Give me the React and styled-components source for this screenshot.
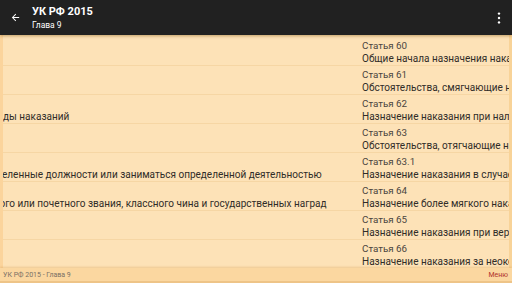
import React from "react";
import styled, { createGlobalStyle } from "styled-components";

const Global = createGlobalStyle`
  html, body { margin: 0; padding: 0; width: 512px; height: 283px; overflow: hidden; }
  body { font-family: Roboto, "Noto Sans", sans-serif; }
`;

const Screen = styled.div`
  width: 512px;
  height: 283px;
  display: flex;
  flex-direction: column;
  background: #fde2b7;
  overflow: hidden;
`;

const Toolbar = styled.header`
  height: 35px;
  flex: 0 0 35px;
  background: #212121;
  display: flex;
  align-items: center;
  padding: 0 6px 0 8px;
  box-shadow: 0 1px 3px rgba(120, 70, 0, 0.45);
  position: relative;
  z-index: 2;
`;

const IconButton = styled.div`
  width: 14px;
  height: 14px;
  display: flex;
  align-items: center;
  justify-content: center;
  color: #fff;
`;

const Titles = styled.div`
  display: flex;
  flex-direction: column;
  margin-left: 10px;
  flex: 1;
  color: #fff;
`;

const Title = styled.div`
  font-size: 11px;
  font-weight: 700;
  line-height: 14px;
`;

const Subtitle = styled.div`
  font-size: 8.5px;
  line-height: 11px;
  margin-top: 1px;
`;

const Content = styled.main`
  flex: 1;
  position: relative;
  overflow: hidden;
  padding-top: 2px;
  &::after {
    content: "";
    position: absolute;
    inset: 0;
    pointer-events: none;
    box-shadow: inset 3px 0 0 #fbd49c, inset -3px 0 0 #f8d398;
  }
`;

const Pager = styled.div`
  display: flex;
  width: 1024px;
  margin-left: ${(p) => p.$offset}px;
`;

const Page = styled.ul`
  list-style: none;
  margin: 0;
  padding: 0;
  width: 512px;
  flex: 0 0 512px;
`;

const Row = styled.li`
  box-sizing: border-box;
  height: 29px;
  padding: 3px 0 0 12px;
  border-bottom: 1px solid #f6d6a4;
  white-space: nowrap;
  overflow: hidden;
`;

const RowTitle = styled.div`
  font-size: 9.8px;
  line-height: 12px;
  color: #4a4540;
`;

const RowText = styled.div`
  font-size: 10px;
  line-height: 14px;
  color: #302c28;
`;

const Footer = styled.footer`
  flex: 0 0 13px;
  height: 13px;
  background: #fbd7a0;
  border-bottom: 2px solid #eec488;
  display: flex;
  align-items: center;
  justify-content: space-between;
  padding: 0 4px 0 3px;
  position: relative;
  z-index: 2;
  box-shadow: 0 -1px 2px rgba(200, 140, 60, 0.3);
`;

const FooterText = styled.span`
  font-size: 7px;
  color: ${(p) => (p.$accent ? "#b0302a" : "#7a7065")};
`;

const leftItems = [
  ["Статья 43", "Понятие и цели наказания"],
  ["Статья 44", "Виды наказаний"],
  ["Статья 45", "Основные и дополнительные виды наказаний"],
  ["Статья 46", "Штраф"],
  ["Статья 47", "Лишение права занимать определенные должности или заниматься определенной деятельностью"],
  ["Статья 48", "Лишение специального, воинского или почетного звания, классного чина и государственных наград"],
  ["Статья 49", "Обязательные работы"],
  ["Статья 50", "Исправительные работы"],
];

const rightItems = [
  ["Статья 60", "Общие начала назначения наказания"],
  ["Статья 61", "Обстоятельства, смягчающие наказание"],
  ["Статья 62", "Назначение наказания при наличии смягчающих обстоятельств"],
  ["Статья 63", "Обстоятельства, отягчающие наказание"],
  ["Статья 63.1", "Назначение наказания в случае нарушения досудебного соглашения"],
  ["Статья 64", "Назначение более мягкого наказания, чем предусмотрено"],
  ["Статья 65", "Назначение наказания при вердикте присяжных"],
  ["Статья 66", "Назначение наказания за неоконченное преступление"],
];

const List = ({ items }) => (
  <Page>
    {items.map(([t, d]) => (
      <Row key={t}>
        <RowTitle>{t}</RowTitle>
        <RowText>{d}</RowText>
      </Row>
    ))}
  </Page>
);

export default function App() {
  return (
    <>
      <Global />
      <Screen>
        <Toolbar>
          <IconButton>
            <svg width="11" height="11" viewBox="0 0 24 24">
              <path d="M20 11H7.83l5.59-5.59L12 4l-8 8 8 8 1.41-1.41L7.83 13H20v-2z" fill="#fff" />
            </svg>
          </IconButton>
          <Titles>
            <Title>УК РФ 2015</Title>
            <Subtitle>Глава 9</Subtitle>
          </Titles>
          <IconButton>
            <svg width="4" height="12" viewBox="0 0 4 12">
              <circle cx="2" cy="1.6" r="1.2" fill="#fff" />
              <circle cx="2" cy="6" r="1.2" fill="#fff" />
              <circle cx="2" cy="10.4" r="1.2" fill="#fff" />
            </svg>
          </IconButton>
        </Toolbar>
        <Content>
          <Pager $offset={-162}>
            <List items={leftItems} />
            <List items={rightItems} />
          </Pager>
        </Content>
        <Footer>
          <FooterText>УК РФ 2015 - Глава 9</FooterText>
          <FooterText $accent>Меню</FooterText>
        </Footer>
      </Screen>
    </>
  );
}
